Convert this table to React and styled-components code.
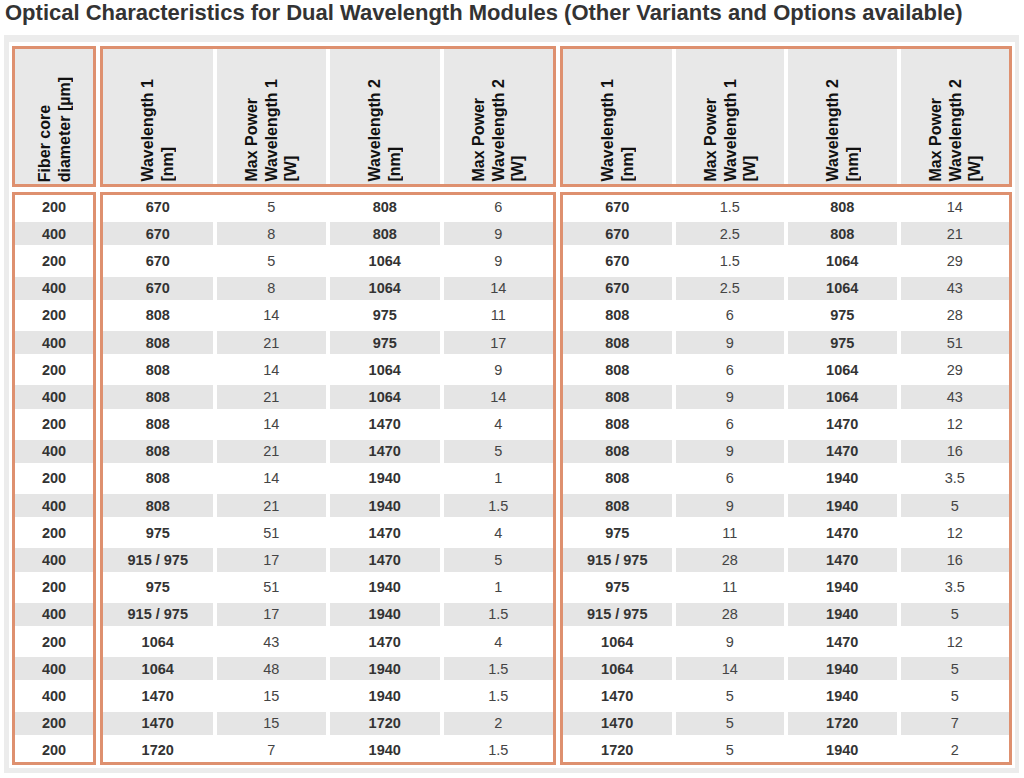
import React from "react";
import styled, { createGlobalStyle } from "styled-components";

const GlobalStyle = createGlobalStyle`
  body {
    margin: 0;
    background: #fff;
    font-family: "Liberation Sans", Arial, sans-serif;
  }
`;

// [fiber, w1, p1, w2, p2, w1b, p1b, w2b, p2b]
const rows = [
  ["200", "670", "5", "808", "6", "670", "1.5", "808", "14"],
  ["400", "670", "8", "808", "9", "670", "2.5", "808", "21"],
  ["200", "670", "5", "1064", "9", "670", "1.5", "1064", "29"],
  ["400", "670", "8", "1064", "14", "670", "2.5", "1064", "43"],
  ["200", "808", "14", "975", "11", "808", "6", "975", "28"],
  ["400", "808", "21", "975", "17", "808", "9", "975", "51"],
  ["200", "808", "14", "1064", "9", "808", "6", "1064", "29"],
  ["400", "808", "21", "1064", "14", "808", "9", "1064", "43"],
  ["200", "808", "14", "1470", "4", "808", "6", "1470", "12"],
  ["400", "808", "21", "1470", "5", "808", "9", "1470", "16"],
  ["200", "808", "14", "1940", "1", "808", "6", "1940", "3.5"],
  ["400", "808", "21", "1940", "1.5", "808", "9", "1940", "5"],
  ["200", "975", "51", "1470", "4", "975", "11", "1470", "12"],
  ["400", "915 / 975", "17", "1470", "5", "915 / 975", "28", "1470", "16"],
  ["200", "975", "51", "1940", "1", "975", "11", "1940", "3.5"],
  ["400", "915 / 975", "17", "1940", "1.5", "915 / 975", "28", "1940", "5"],
  ["200", "1064", "43", "1470", "4", "1064", "9", "1470", "12"],
  ["400", "1064", "48", "1940", "1.5", "1064", "14", "1940", "5"],
  ["400", "1470", "15", "1940", "1.5", "1470", "5", "1940", "5"],
  ["200", "1470", "15", "1720", "2", "1470", "5", "1720", "7"],
  ["200", "1720", "7", "1940", "1.5", "1720", "5", "1940", "2"],
];

const pairHeaders = [
  ["Wavelength 1", "[nm]"],
  ["Max Power", "Wavelength 1", "[W]"],
  ["Wavelength 2", "[nm]"],
  ["Max Power", "Wavelength 2", "[W]"],
];

// which columns of a pair group are wavelengths (bold)
const boldCol = [true, false, true, false];

const groups = [
  { headers: [["Fiber core", "diameter [µm]"]], cols: [0], bold: [true] },
  { headers: pairHeaders, cols: [1, 2, 3, 4], bold: boldCol },
  { headers: pairHeaders, cols: [5, 6, 7, 8], bold: boldCol },
];

const App = () => {
  return (
    <>
      <GlobalStyle />
      <Title>
        Optical Characteristics for Dual Wavelength Modules (Other Variants and
        Options available)
      </Title>
      <Panel>
        <Inner>
          {groups.map((g, gi) => (
            <HeadBox key={"h" + gi} $n={g.cols.length}>
              {g.headers.map((lines, i) => (
                <HeadCell key={i}>
                  <VText>
                    {lines.map((l, j) => (
                      <React.Fragment key={j}>
                        {j > 0 && <br />}
                        {l}
                      </React.Fragment>
                    ))}
                  </VText>
                </HeadCell>
              ))}
            </HeadBox>
          ))}
          {groups.map((g, gi) => (
            <BodyBox key={"b" + gi} $n={g.cols.length}>
              {rows.map((r, ri) =>
                g.cols.map((c, ci) => (
                  <Cell key={ri + "-" + ci} $alt={ri % 2 === 1} $bold={g.bold[ci]}>
                    {r[c]}
                  </Cell>
                ))
              )}
            </BodyBox>
          ))}
        </Inner>
      </Panel>
    </>
  );
};

const Title = styled.h2`
  margin: 0;
  padding: 1px 0 0 5px;
  height: 34px;
  font-size: 22px;
  line-height: 24px;
  font-weight: bold;
  color: #333;
  white-space: nowrap;
`;

const Panel = styled.div`
  margin-left: 4px;
  width: 1015px;
  box-sizing: border-box;
  background: #ececec;
  padding: 7px 4px 5px 5px;
`;

const Inner = styled.div`
  background: #fff;
  padding: 4px 3px 3px 3px;
  display: grid;
  grid-template-columns: 84px 456px 452px;
  grid-template-rows: 141px 573px;
  column-gap: 4px;
  row-gap: 5px;
`;

const Box = styled.div`
  border: 3px solid #de906f;
  box-sizing: border-box;
  display: grid;
  grid-template-columns: repeat(${(p) => p.$n}, 1fr);
  column-gap: 4px;
`;

const HeadBox = styled(Box)``;

const BodyBox = styled(Box)`
  grid-template-rows: repeat(21, 1fr);
  row-gap: 4px;
`;

const HeadCell = styled.div`
  background: #e8e8e8;
  display: flex;
  align-items: flex-end;
  justify-content: center;
  padding-bottom: 2px;
`;

const VText = styled.div`
  writing-mode: vertical-rl;
  transform: rotate(180deg);
  font-size: 16px;
  line-height: 19.5px;
  font-weight: bold;
  color: #111;
  white-space: nowrap;
`;

const Cell = styled.div`
  background: ${(p) => (p.$alt ? "#e5e5e5" : "#fff")};
  display: flex;
  align-items: center;
  justify-content: center;
  font-size: 14.5px;
  font-weight: ${(p) => (p.$bold ? "bold" : "normal")};
  color: ${(p) => (p.$bold ? "#333" : "#444")};
`;

export default App;
